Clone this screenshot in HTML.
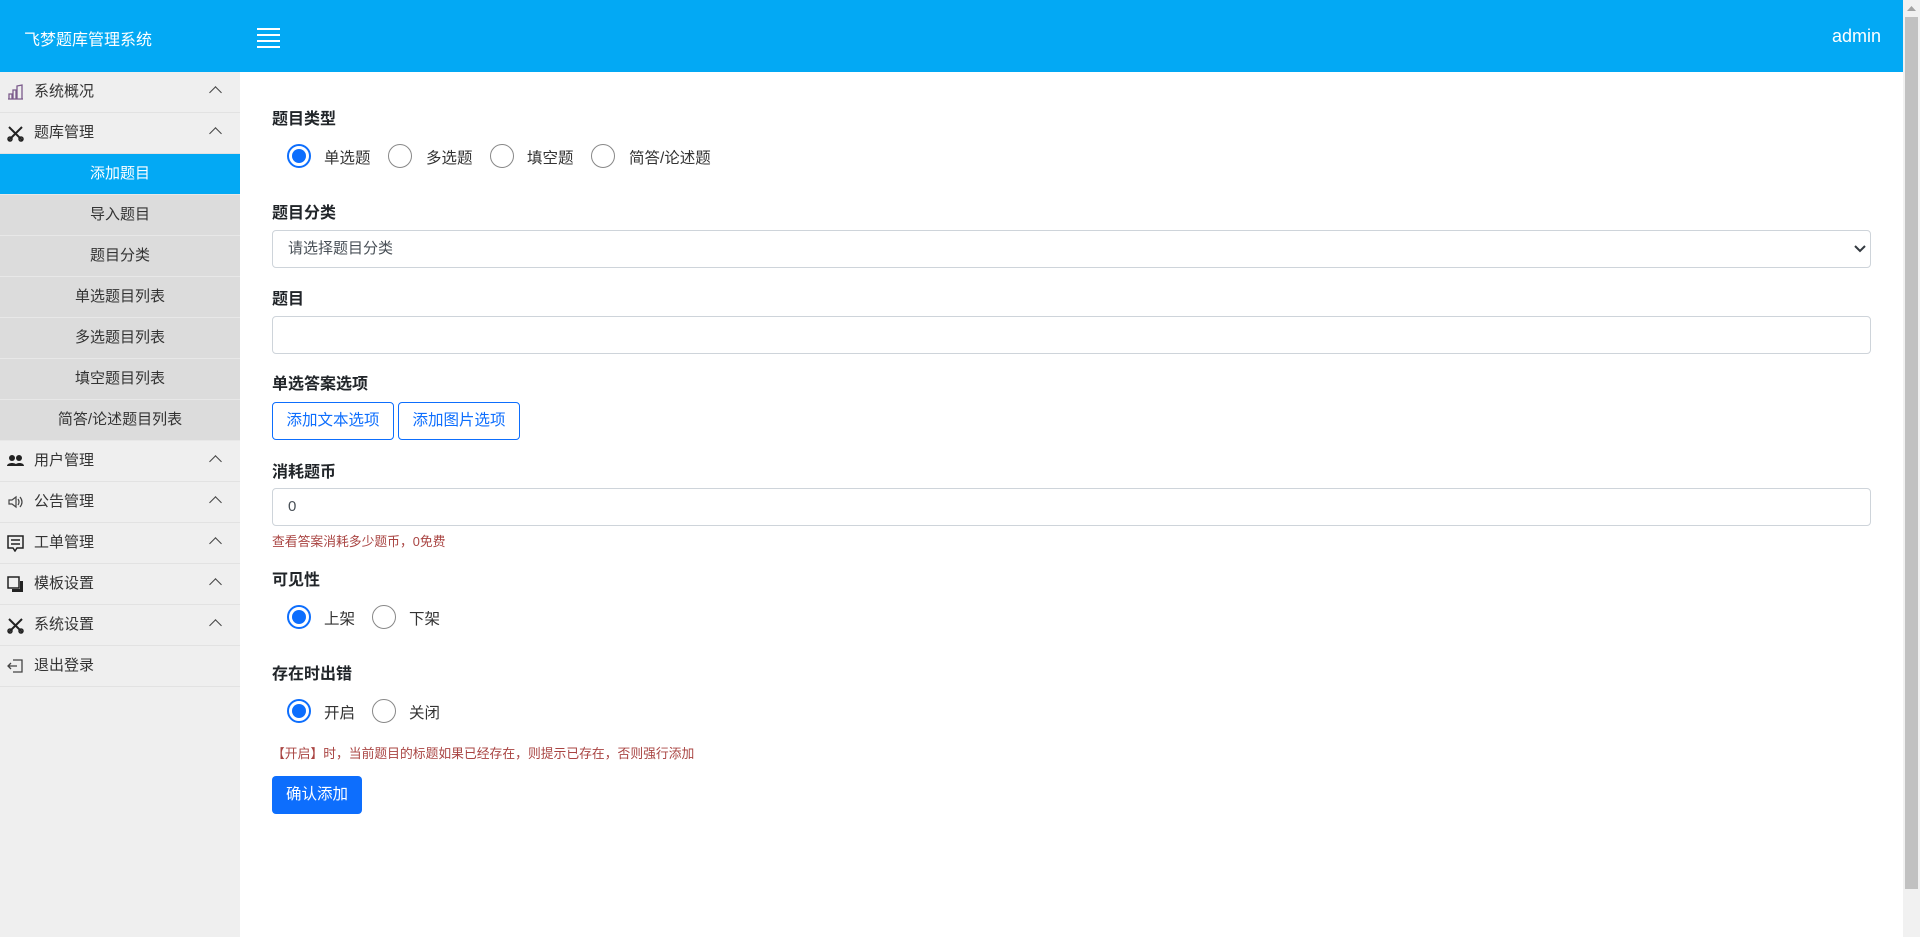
<!DOCTYPE html>
<html><head><meta charset="utf-8"><style>
*{box-sizing:border-box;margin:0;padding:0}
body{width:1920px;height:937px;overflow:hidden;background:#fff;font-family:"Liberation Sans","Noto Sans CJK SC",sans-serif;color:#212529;position:relative}
.hd{position:absolute;left:0;top:0;width:1903px;height:72px;background:#03a9f4;color:#fff}
.logo{position:absolute;left:24px;top:26px;font-size:16px}
.burger{position:absolute;left:257px;top:28px;width:23px}
.burger i{display:block;height:2px;background:#fff;margin-bottom:4px}
.admin{position:absolute;right:22px;top:26px;font-size:18px}
.sb{position:absolute;left:0;top:72px;width:240px;height:865px;background:#efefef}
.it{height:41px;border-bottom:1px solid #e2e2e2;position:relative;font-size:15px;color:#333;line-height:40px;padding-left:34px}
.it svg.ic{position:absolute;left:7px;top:12px}
.it .car{position:absolute;left:211px;top:16px;width:9px;height:9px;border-left:1.5px solid #444;border-top:1.5px solid #444;transform:rotate(45deg)}
.sub{height:41px;background:#dcdcdc;border-bottom:1px solid #e8e8e8;text-align:center;line-height:40px;font-size:15px;color:#333}
.sub.on{background:#03a9f4;color:#fff}
.sc{position:absolute;left:1903px;top:0;width:17px;height:937px;background:#f1f1f1}
.th{position:absolute;left:2px;top:17px;width:13px;height:872px;background:#c1c1c1}
.lb{position:absolute;left:272px;font-weight:bold;font-size:16px}
.r{position:absolute;width:24px;height:24px;border-radius:50%;border:1px solid #888}
.r.on{border:2px solid #0d6efd;background:#fff}
.r.on::after{content:"";position:absolute;left:3px;top:3px;width:14px;height:14px;border-radius:50%;background:#0d6efd}
.rt{position:absolute;font-size:15.5px;color:#333}
.inp{position:absolute;left:272px;width:1599px;height:38px;border:1px solid #ced4da;border-radius:4px;font-size:15px;color:#495057;padding-left:15px;line-height:36px}
.btn{position:absolute;top:402px;height:38px;border:1px solid #0d6efd;border-radius:4px;color:#0d6efd;font-size:15.5px;line-height:36px;text-align:center}
.help{position:absolute;left:272px;font-size:12.8px;color:#a94442}
</style></head><body>
<div class="hd"><div class="logo">飞梦题库管理系统</div><div class="burger"><i></i><i></i><i></i><i></i></div><div class="admin">admin</div></div>
<div class="sb">
<div class="it"><svg class="ic" width="17" height="16" viewBox="0 0 17 16"><path d="M1 15h15M2 15V10h3v5M6 15V6h3v9M10 15V2l5-1v14" fill="none" stroke="#7a5a8a" stroke-width="1.3"/></svg>系统概况<span class="car"></span></div>
<div class="it"><svg class="ic" width="17" height="17" viewBox="0 0 17 17"><path d="M2 2l13 13M15 2L2 15" stroke="#222" stroke-width="2"/><circle cx="3" cy="14" r="2" fill="none" stroke="#222" stroke-width="1.5"/><circle cx="14" cy="14" r="2" fill="none" stroke="#222" stroke-width="1.5"/></svg>题库管理<span class="car"></span></div>
<div class="sub on">添加题目</div>
<div class="sub">导入题目</div>
<div class="sub">题目分类</div>
<div class="sub">单选题目列表</div>
<div class="sub">多选题目列表</div>
<div class="sub">填空题目列表</div>
<div class="sub">简答/论述题目列表</div>
<div class="it"><svg class="ic" width="17" height="16" viewBox="0 0 17 16"><circle cx="5" cy="5" r="3" fill="#222"/><circle cx="12" cy="5" r="3" fill="#222"/><path d="M0 13c0-4 10-4 10 0zM8 13c0-4 9-4 9 0z" fill="#222"/></svg>用户管理<span class="car"></span></div>
<div class="it"><svg class="ic" width="17" height="16" viewBox="0 0 17 16"><path d="M2 6h3l4-3v10l-4-3H2z M11 5q2 3 0 6M13 3q4 5 0 10" fill="none" stroke="#444" stroke-width="1.2"/></svg>公告管理<span class="car"></span></div>
<div class="it"><svg class="ic" width="17" height="17" viewBox="0 0 17 17"><path d="M1 1h15v12H10l-2 3-2-3H1z M4 5h9M4 9h9" fill="none" stroke="#222" stroke-width="1.5"/></svg>工单管理<span class="car"></span></div>
<div class="it"><svg class="ic" width="17" height="17" viewBox="0 0 17 17"><rect x="1" y="1" width="11" height="11" fill="none" stroke="#222" stroke-width="1.5"/><path d="M13 5h3v11H5v-3h8z" fill="#222"/></svg>模板设置<span class="car"></span></div>
<div class="it"><svg class="ic" width="17" height="17" viewBox="0 0 17 17"><path d="M2 2l13 13M15 2L2 15" stroke="#222" stroke-width="2"/><circle cx="3" cy="14" r="2" fill="none" stroke="#222" stroke-width="1.5"/><circle cx="14" cy="14" r="2" fill="none" stroke="#222" stroke-width="1.5"/></svg>系统设置<span class="car"></span></div>
<div class="it"><svg class="ic" width="17" height="16" viewBox="0 0 17 16"><path d="M6 2h9v12H6M1 8h9M4 5L1 8l3 3" fill="none" stroke="#444" stroke-width="1.3"/></svg>退出登录</div>
</div>

<div class="lb" style="top:105px">题目类型</div>
<div class="r on" style="left:287px;top:144px"></div><div class="rt" style="left:324px;top:146px">单选题</div>
<div class="r" style="left:388px;top:144px"></div><div class="rt" style="left:426px;top:146px">多选题</div>
<div class="r" style="left:490px;top:144px"></div><div class="rt" style="left:527px;top:146px">填空题</div>
<div class="r" style="left:591px;top:144px"></div><div class="rt" style="left:629px;top:146px">简答/论述题</div>

<div class="lb" style="top:199px">题目分类</div>
<div class="inp" style="top:230px">请选择题目分类<svg style="position:absolute;right:4px;top:14px" width="12" height="8" viewBox="0 0 12 8"><path d="M1 1l5 5 5-5" fill="none" stroke="#343a40" stroke-width="2"/></svg></div>

<div class="lb" style="top:285px">题目</div>
<div class="inp" style="top:316px"></div>

<div class="lb" style="top:370px">单选答案选项</div>
<div class="btn" style="left:272px;width:122px">添加文本选项</div>
<div class="btn" style="left:398px;width:122px">添加图片选项</div>

<div class="lb" style="top:458px">消耗题币</div>
<div class="inp" style="top:488px">0</div>
<div class="help" style="top:531px">查看答案消耗多少题币，0免费</div>

<div class="lb" style="top:566px">可见性</div>
<div class="r on" style="left:287px;top:605px"></div><div class="rt" style="left:324px;top:607px">上架</div>
<div class="r" style="left:372px;top:605px"></div><div class="rt" style="left:409px;top:607px">下架</div>

<div class="lb" style="top:660px">存在时出错</div>
<div class="r on" style="left:287px;top:699px"></div><div class="rt" style="left:324px;top:701px">开启</div>
<div class="r" style="left:372px;top:699px"></div><div class="rt" style="left:409px;top:701px">关闭</div>
<div class="help" style="top:743px">【开启】时，当前题目的标题如果已经存在，则提示已存在，否则强行添加</div>

<div style="position:absolute;left:272px;top:776px;width:90px;height:38px;background:#0d6efd;border-radius:4px;color:#fff;font-size:15.5px;line-height:38px;text-align:center">确认添加</div>

<div class="sc"><svg style="position:absolute;left:4px;top:6px" width="9" height="5"><path d="M0 5L4.5 0 9 5z" fill="#a3a3a3"/></svg><div class="th"></div></div>
</body></html>
